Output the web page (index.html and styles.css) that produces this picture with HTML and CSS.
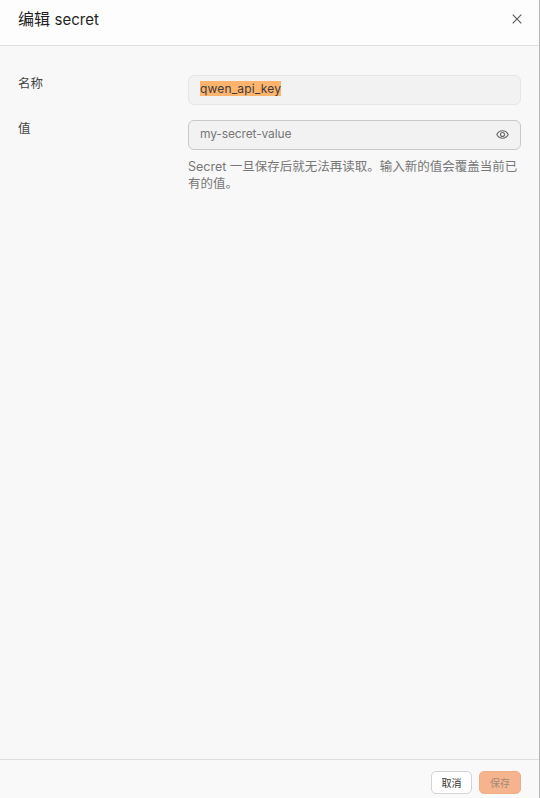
FILE: index.html
```html
<!DOCTYPE html>
<html lang="zh-CN">
<head>
    <meta charset="UTF-8">
    <meta name="viewport" content="width=device-width, initial-scale=1.0">
    <title>编辑 secret</title>
    <link rel="stylesheet" href="styles.css">
</head>
<body>
    <div class="dialog">
        <div class="dialog-header">
            <div class="dialog-title">编辑 <span class="title-latin">secret</span></div>
            <button class="close-button" aria-label="关闭">
                <svg width="10" height="10" viewBox="0 0 10 10"><path d="M.7.7l8.600 8.600M9.300.7L.7 9.300"/></svg>
            </button>
        </div>

        <div class="dialog-body">
            <div class="form-row">
                <div class="form-label">名称</div>
                <div class="form-field">
                    <div class="text-input name-input"><span class="selected">qwen_api_key</span></div>
                </div>
            </div>
            <div class="form-row">
                <div class="form-label">值</div>
                <div class="form-field">
                    <div class="text-input value-input">
                        <span class="value-text">my-secret-value</span>
                        <svg class="eye-icon" width="13" height="13" viewBox="0 0 13 13"><path d="M.8 6.500C2 4 4 2.700 6.500 2.700s4.500 1.300 5.700 3.800c-1.200 2.500-3.200 3.800-5.700 3.800S2 9 .8 6.500z"/><circle cx="6.500" cy="6.500" r="2"/></svg>
                    </div>
                    <div class="help-text">Secret 一旦保存后就无法再读取。输入新的值会覆盖当前已有的值。</div>
                </div>
            </div>
        </div>

        <div class="dialog-footer">
            <button class="btn btn-cancel">取消</button>
            <button class="btn btn-save">保存</button>
        </div>
    </div>
</body>
</html>
```

FILE: styles.css
```css
html, body {
    height: 100%;
}
body {
    margin: 0;
    font-family: Inter, "Noto Sans CJK SC", sans-serif;
    color: #1f1f1f;
    background-color: #f8f8f8;
}
.dialog {
    display: flex;
    flex-direction: column;
    height: 100vh;
    box-sizing: border-box;
    border-right: 1px solid #b5b5b5;
}
.dialog-header {
    display: flex;
    justify-content: space-between;
    align-items: center;
    height: 46px;
    box-sizing: border-box;
    padding: 0 17px 7px 18px;
    background-color: #fdfdfd;
    border-bottom: 1px solid #dedede;
}
.dialog-title {
    font-size: 16px;
    line-height: 40px;
}
.title-latin {
    font-size: 15px;
}
.close-button {
    display: flex;
    padding: 0;
    background: none;
    border: 0;
    cursor: pointer;
}
.close-button path {
    fill: none;
    stroke: #555;
    stroke-width: 1.1;
}
.dialog-body {
    flex: 1;
    padding: 29px 18px 0 18px;
}
.form-row {
    display: flex;
    margin-bottom: 15px;
}
.form-label {
    width: 170px;
    flex-shrink: 0;
    font-size: 12.5px;
    line-height: 17px;
    color: #444;
}
.form-field {
    flex: 1;
}
.text-input {
    display: flex;
    align-items: center;
    height: 30px;
    box-sizing: border-box;
    padding: 0 11px 3px;
    font-size: 12px;
    background-color: #f2f2f2;
    border: 1px solid #e6e6e6;
    border-radius: 6px;
}
.selected {
    color: #3b3b3b;
    letter-spacing: .16px;
    background-color: #ffb46e;
}
.value-input {
    justify-content: space-between;
    color: #777;
    border-color: #c9c9c9;
}
.value-text {
    letter-spacing: -.13px;
}
.eye-icon {
    margin-top: 1px;
}
.eye-icon path,
.eye-icon circle {
    fill: none;
    stroke: #666;
    stroke-width: 1.1;
}
.help-text {
    margin-top: 8px;
    font-size: 12.5px;
    line-height: 17px;
    color: #777;
}
.dialog-footer {
    display: flex;
    justify-content: flex-end;
    gap: 7px;
    height: 39px;
    box-sizing: border-box;
    padding: 11px 18px 0 0;
    background-color: #f9f9f9;
    border-top: 1px solid #dedede;
}
.btn {
    width: 41px;
    height: 23px;
    padding: 0;
    font-family: inherit;
    font-size: 10px;
    border-radius: 5px;
    cursor: pointer;
}
.btn-cancel {
    color: #333;
    background-color: #fff;
    border: 1px solid #d4d4d4;
}
.btn-save {
    width: 42px;
    color: #a58a75;
    background-color: #f6b48e;
    border: 1px solid #f0ad86;
}
```
